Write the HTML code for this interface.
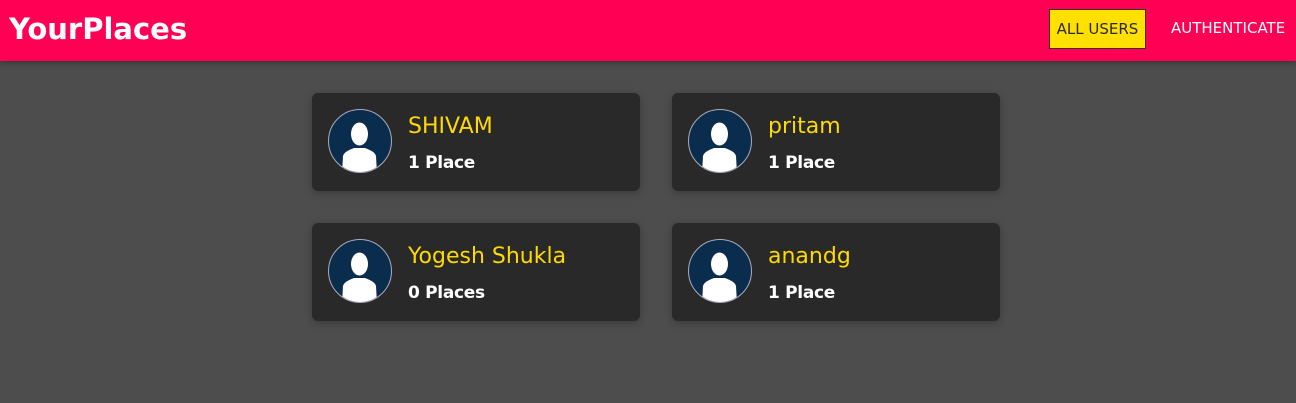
<!DOCTYPE html>
<html><head><meta charset="utf-8"><style>
*{margin:0;padding:0;box-sizing:border-box}
body{width:1296px;height:403px;background:#4d4d4d;font-family:"DejaVu Sans","Liberation Sans",sans-serif;position:relative;overflow:hidden}
header{position:absolute;left:0;top:0;width:1296px;height:61px;background:#ff0055;box-shadow:0 2px 6px rgba(0,0,0,.3)}
.logo{position:absolute;left:9px;top:12px;color:#fff;font-weight:bold;font-size:29px}
.btn{position:absolute;left:1049px;top:9px;width:97px;height:40px;background:#ffe000;border:1px solid #333;color:#292929;font-size:15px;line-height:38px;text-align:center}
.auth{position:absolute;left:1171px;top:19px;color:#fff;font-size:15px}
.card{position:absolute;width:328px;height:98px;background:#292929;border-radius:6px;box-shadow:0 2px 8px rgba(0,0,0,.26)}
.av{position:absolute;left:16px;top:16px;width:64px;height:64px;border-radius:50%;background:#0b2d4d;border:1px solid #aab;overflow:hidden}
.name{position:absolute;left:96px;top:21px;color:#ffd900;font-size:22px}
.pl{position:absolute;left:96px;top:60px;color:#fff;font-weight:bold;font-size:17px;letter-spacing:-0.3px}
</style></head><body>
<header><div class="logo">YourPlaces</div><div class="btn">ALL USERS</div><div class="auth">AUTHENTICATE</div></header>
<div class="card" style="left:312px;top:93px"><div class="av"><svg width="62" height="62" viewBox="0 0 62 62"><ellipse cx="30.5" cy="24" rx="8.5" ry="11.5" fill="#fff"/><path d="M13 64 L14 46 C15 42 20 40 25 38 L36 38 C41 40 46 42 47 46 L48 64 Z" fill="#fff"/></svg></div><div class="name">SHIVAM</div><div class="pl">1 Place</div></div>
<div class="card" style="left:672px;top:93px"><div class="av"><svg width="62" height="62" viewBox="0 0 62 62"><ellipse cx="30.5" cy="24" rx="8.5" ry="11.5" fill="#fff"/><path d="M13 64 L14 46 C15 42 20 40 25 38 L36 38 C41 40 46 42 47 46 L48 64 Z" fill="#fff"/></svg></div><div class="name">pritam</div><div class="pl">1 Place</div></div>
<div class="card" style="left:312px;top:223px"><div class="av"><svg width="62" height="62" viewBox="0 0 62 62"><ellipse cx="30.5" cy="24" rx="8.5" ry="11.5" fill="#fff"/><path d="M13 64 L14 46 C15 42 20 40 25 38 L36 38 C41 40 46 42 47 46 L48 64 Z" fill="#fff"/></svg></div><div class="name">Yogesh Shukla</div><div class="pl">0 Places</div></div>
<div class="card" style="left:672px;top:223px"><div class="av"><svg width="62" height="62" viewBox="0 0 62 62"><ellipse cx="30.5" cy="24" rx="8.5" ry="11.5" fill="#fff"/><path d="M13 64 L14 46 C15 42 20 40 25 38 L36 38 C41 40 46 42 47 46 L48 64 Z" fill="#fff"/></svg></div><div class="name">anandg</div><div class="pl">1 Place</div></div>
</body></html>
